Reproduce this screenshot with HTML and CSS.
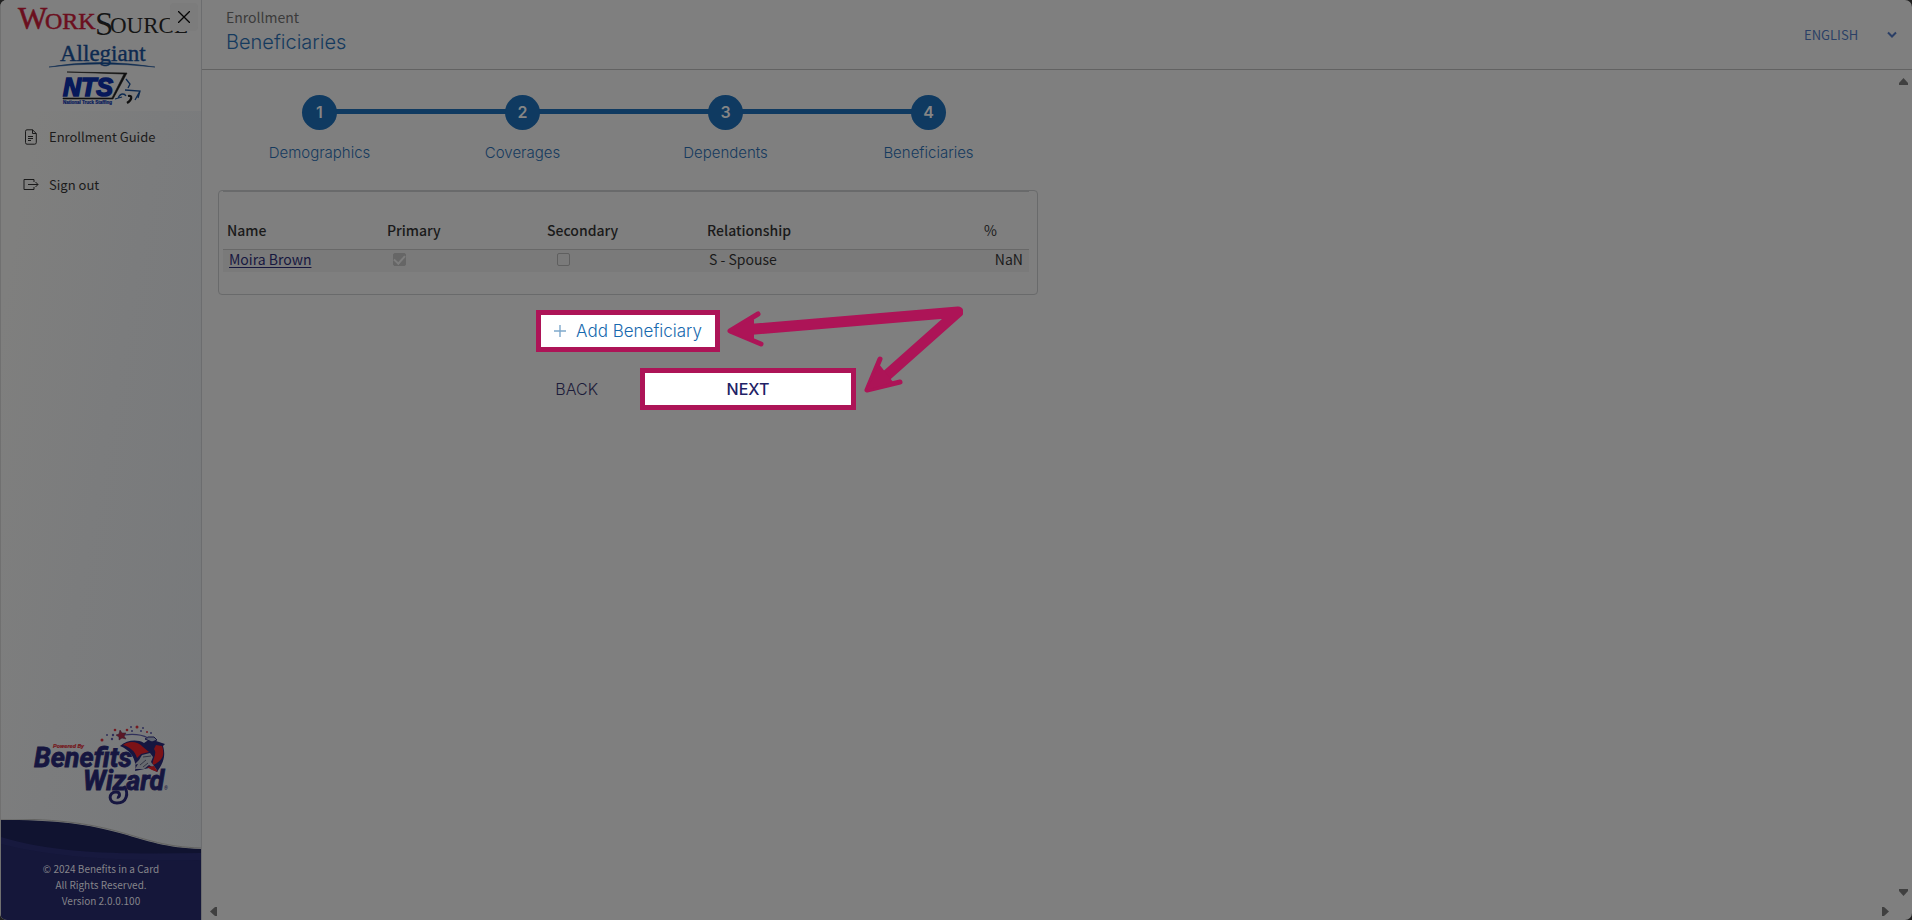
FILE: index.html
```html
<!DOCTYPE html>
<html lang="en">
<head>
<meta charset="utf-8">
<title>Beneficiaries</title>
<link rel="stylesheet" href="styles.css">
</head>
<body>
<div class="app">
  <aside class="sidebar">
    <div class="brand">
      <svg class="brand-logos" viewBox="0 0 200 111" role="img" aria-label="WorkSource, Allegiant, NTS">
        <g font-family="Liberation Serif, serif">
          <text x="17" y="29" font-size="31" fill="#6b0f1e" stroke="#6b0f1e" stroke-width=".6">W</text>
          <text x="44" y="29" font-size="24" fill="#6b0f1e" stroke="#6b0f1e" stroke-width=".5">ORK</text>
          <text x="94" y="35" font-size="33" fill="#151515">S</text>
          <text x="109" y="33" font-size="23" fill="#151515">OURCE</text>
          <text x="59" y="61" font-size="23" fill="#0d2a50" stroke="#0d2a50" stroke-width=".4">Allegiant</text>
        </g>
        <path d="M48 67Q98 58 154 67Q98 61 48 67Z" fill="#0d2a50" stroke="#0d2a50" stroke-width=".5"/>
        <text x="62" y="96" font-family="Liberation Sans, sans-serif" font-size="25" font-weight="700" font-style="italic" fill="#07195a" stroke="#07195a" stroke-width="1.6">NTS</text>
        <path d="M66 72L126 73L112 99H62V98H111L123 74Z" fill="#101010" stroke="#101010" stroke-width=".6"/>
        <text x="62" y="104" font-family="Liberation Sans, sans-serif" font-size="4.500" font-weight="700" fill="#07195a" stroke="#07195a" stroke-width=".2">National Truck Staffing</text>
        <path d="M125 79L129 84L127 88M124 90L139 91L137 98M139 91L134 100M114 99L121 97M117 98C120 92 124 94 125 96" fill="none" stroke="#0d2a50" stroke-width="1.3"/>
        <path d="M127 96C132 95 131 100 126 103" fill="none" stroke="#101010" stroke-width="2.2"/>
      </svg>
      <button class="close" type="button" aria-label="Close menu">
        <svg viewBox="0 0 12 12" width="12" height="12"><path d="M0 0L12 12M12 0L0 12" stroke="#050505" stroke-width="1.3"/></svg>
      </button>
    </div>
    <nav class="menu">
      <a class="menu-link" href="#guide">
        <svg viewBox="0 0 16 16" width="16" height="16" fill="none" stroke="#1b1b1b"><path d="M4 .8H9.500L13.300 4.500V13.500Q13.300 15.200 11.600 15.200H4Q2.500 15.200 2.500 13.500V2.300Q2.500 .8 4 .8ZM9.500 .8V4.500H13.300M5 7.500H10M5 9.500H10M5 11.500H8"/></svg>
        <span>Enrollment Guide</span>
      </a>
      <a class="menu-link" href="#signout">
        <svg viewBox="0 0 16 16" width="16" height="16" fill="none" stroke="#1b1b1b"><path d="M11 5V2.500H1V12.500H11V10M5 7.500H15M12.500 5L15 7.500L12.500 10"/></svg>
        <span>Sign out</span>
      </a>
    </nav>
    <svg class="wizard" viewBox="0 0 140 84" role="img" aria-label="Powered By Benefits Wizard">
      <g font-family="Roboto, sans-serif" font-weight="700" font-style="italic" fill="#161640">
        <text x="22" y="23" font-size="6" fill="#751a20" stroke="#751a20" stroke-width=".2">Powered By</text>
        <g stroke="#161640" stroke-width=".8">
          <text x="3" y="42" font-size="27">Benefits</text>
          <text x="52" y="65" font-size="27">Wizard</text>
        </g>
        <text x="133" y="65" font-size="5" font-weight="400">®</text>
      </g>
      <path d="M93 61C98 68 96 78 86 78C77 78 77 67 85 67C90 67 89 73 86 72" fill="none" stroke="#161640" stroke-width="3"/>
      <path d="M89 21C96 15 106 14 113 18L119 14L134 19L132 21C136 34 129 42 126 47L118 43L104 46C106 38 102 26 89 21Z" fill="#161640"/>
      <path d="M92 20C99 15 107 17 112 22L118 27L110 29L106 33C104 26 99 22 92 20Z" fill="#7c1216"/>
      <path d="M125 20L131 21C135 32 129 37 122 40C120 36 127 29 123 24Z" fill="#7c1216"/>
      <path d="M114 14L117 12L123 12L126 15L121 17Z" fill="#5f6470" stroke="#161640"/>
      <path d="M111 30L119 28L122 32L120 37L126 45L118 40L113 44L104 44L107 39L103 40L108 35Z" fill="#686b70"/>
      <path d="M109 40L115 35M112 42L117 38M112 32L120 31" stroke="#262738" stroke-width=".8"/>
      <path d="M116 42L123 41L127 47L121 45Z" fill="#7c1216"/>
      <path d="M93 10Q108 8 117 13" fill="none" stroke="#30305a" stroke-width="1.200"/>
      <path d="M89 5L91 8L95 8L93 11L95 14L91 13L88 15L88 12L85 10L88 9Z" fill="#5c1826" stroke="#30182f" stroke-width=".5"/>
      <g fill="#751a20"><circle cx="71" cy="15" r="1.500"/><circle cx="84" cy="5" r="1.300"/><circle cx="96" cy="5" r="1.300"/><circle cx="106" cy="2" r="1.500"/><circle cx="116" cy="7" r="1"/></g>
      <g fill="#30305a"><circle cx="76" cy="10" r="1"/><circle cx="81" cy="14" r="1.200"/><circle cx="82" cy="10" r="1.200"/><circle cx="100" cy="2" r="1"/><circle cx="101" cy="6" r="1"/><circle cx="110" cy="6" r="1"/><circle cx="112" cy="3" r="1"/><circle cx="120" cy="8" r="1"/></g>
    </svg>
    <svg class="wave" viewBox="0 0 201 43" preserveAspectRatio="none" aria-hidden="true">
      <path d="M0 1C125 0 130 28 201 30V43H0Z" fill="#101330"/>
      <path d="M0 0C125 -1 130 27 201 29" fill="none" stroke="#626260" stroke-width="1"/>
      <path d="M0 18C60 36 130 35 201 34V43H0Z" fill="#17193e"/>
      <path d="M0 25C60 40 130 42 201 41V43H0Z" fill="#15173a"/>
    </svg>
    <footer class="legal">
      <p>© 2024 Benefits in a Card</p>
      <p>All Rights Reserved.</p>
      <p>Version 2.0.0.100</p>
    </footer>
  </aside>

  <div class="page">
    <header class="topbar">
      <div>
        <p class="section">Enrollment</p>
        <h1 class="title">Beneficiaries</h1>
      </div>
      <label class="language">
        <select aria-label="Language"><option>ENGLISH</option></select>
        <svg viewBox="0 0 10 7" width="10" height="7"><path d="M1 1.500L5 5.500L9 1.500" fill="none" stroke="#2b3f66" stroke-width="2"/></svg>
      </label>
    </header>

    <div class="viewport">
      <main class="content">
        <ol class="steps">
          <li><span class="dot">1</span><span>Demographics</span></li>
          <li><span class="dot">2</span><span>Coverages</span></li>
          <li><span class="dot">3</span><span>Dependents</span></li>
          <li><span class="dot">4</span><span>Beneficiaries</span></li>
        </ol>
        <section class="card">
          <table class="grid">
            <thead>
              <tr><th>Name</th><th>Primary</th><th>Secondary</th><th>Relationship</th><th class="pct">%</th></tr>
            </thead>
            <tbody>
              <tr>
                <td><a href="#moira">Moira Brown</a></td>
                <td class="check-primary"><input type="checkbox" aria-label="Primary" checked disabled></td>
                <td class="check-secondary"><input type="checkbox" aria-label="Secondary" disabled></td>
                <td>S - Spouse</td>
                <td class="num">NaN</td>
              </tr>
            </tbody>
          </table>
        </section>
        <div class="actions">
          <div class="action-row">
            <button class="add" type="button">
              <svg viewBox="0 0 12 12" width="12" height="12"><path d="M6 0V12M0 6H12" stroke="#7fa9cc" stroke-width="1.400"/></svg>
              Add Beneficiary
            </button>
          </div>
          <div class="action-row">
            <button class="back" type="button">BACK</button>
            <button class="next" type="button">NEXT</button>
          </div>
          <svg class="arrows" viewBox="0 0 240 110" width="240" height="110" aria-hidden="true">
            <g fill="none" stroke="#ad1457" stroke-linecap="round" stroke-linejoin="round">
              <path d="M20 32L235 14L154 86" stroke-width="11"/>
              <path d="M35 16L7 33L38 46" stroke-width="5"/>
              <path d="M157 61L144 92L177 84" stroke-width="5"/>
            </g>
            <path d="M7 33L31 21V44ZM144 92L156 66L170 84Z" fill="#ad1457"/>
          </svg>
        </div>
      </main>
      <div class="bar-y">
        <svg viewBox="0 0 9 7" width="9" height="7"><path d="M4.500 0L9 5V7H0V5Z" fill="#404040"/></svg>
        <svg viewBox="0 0 9 7" width="9" height="7"><path d="M4.500 7L9 2V0H0V2Z" fill="#404040"/></svg>
      </div>
      <div class="bar-x">
        <svg viewBox="0 0 7 9" width="7" height="9"><path d="M0 4.500L5 0H7V9H5Z" fill="#404040"/></svg>
        <svg viewBox="0 0 7 9" width="7" height="9"><path d="M7 4.500L2 0H0V9H2Z" fill="#404040"/></svg>
      </div>
    </div>
  </div>
</div>
</body>
</html>
```
FILE: styles.css
```css
* { box-sizing: border-box; }

:root {
  --sans: "Noto Sans CJK SC", "Noto Sans", sans-serif;
  --display: Inter, "Open Sans", sans-serif;
  --grey: #7f7f7f;
  --line: #696a6b;
  --blue: #153a5e;
  --ink: #1a1a1a;
  --pink: #ad1457;
}

body {
  margin: 0;
  background: #202020;
  font: 14px/20px var(--sans);
  color: var(--ink);
}

p, h1, ol { margin: 0; padding: 0; }
button { margin: 0; padding: 0; border: 0; background: none; }
svg { display: block; flex: none; }

.app {
  display: flex;
  height: 100vh;
  overflow: hidden;
  border-radius: 7px;
  background: var(--grey);
}

/* Sidebar */
.sidebar {
  display: flex;
  flex-direction: column;
  flex: none;
  width: 202px;
  border-right: 1px solid #6c6d6f;
  border-left: 1px solid #707070;
  background: linear-gradient(100deg, #7f7f7e 15%, #7b7c7d 50%, #77797b 100%);
}
.brand { position: relative; background: var(--grey); }
.brand-logos { width: 200px; height: 111px; }
.close {
  position: absolute;
  top: 3px;
  right: 3px;
  display: grid;
  place-items: center;
  width: 28px;
  height: 28px;
  border-radius: 4px;
  background: #7c7c7c;
}
.menu {
  display: flex;
  flex-direction: column;
  gap: 28px;
  padding: 16px 0 0 22px;
}
.menu-link {
  display: flex;
  align-items: center;
  gap: 10px;
  color: #1b1b1b;
  font-size: 13px;
  text-decoration: none;
}
.wizard { width: 140px; height: 84px; margin: auto 0 10px 30px; }
.wave { width: 100%; height: 43px; margin-bottom: -1px; }
.legal {
  padding-bottom: 11px;
  background: #15173a;
  color: #85858a;
  font-size: 10px;
  line-height: 16px;
  text-align: center;
}

/* Header */
.page { display: flex; flex: 1; flex-direction: column; min-width: 0; }
.topbar {
  display: flex;
  align-items: center;
  justify-content: space-between;
  height: 70px;
  padding: 0 15px 0 24px;
  border-bottom: 1px solid #626262;
}
.section { margin-top: -6px; color: #3b3b3b; line-height: 20px; }
.title {
  color: var(--blue);
  font: 300 20px/30px var(--display);
}
.language { display: flex; align-items: center; gap: 8px; }
.language select {
  appearance: none;
  width: 75px;
  padding: 0;
  border: 0;
  background: none;
  color: #2b3f66;
  font: 13px/20px var(--sans);
}

/* Scrolling area */
.viewport {
  display: grid;
  flex: 1;
  grid-template-columns: 1fr 17px;
  grid-template-rows: 1fr 17px;
  min-height: 0;
}
.content { padding: 25px 16px 0; }
.bar-y, .bar-x {
  display: flex;
  align-items: center;
  justify-content: space-between;
}
.bar-y { flex-direction: column; padding: 8px 0 7px; }
.bar-x { padding: 0 6px 0 8px; }

/* Progress steps */
.steps {
  display: grid;
  grid-template-columns: repeat(4, 1fr);
  max-width: 812px;
  list-style: none;
  color: var(--blue);
  font: 300 15px/20px var(--display);
}
.steps li {
  position: relative;
  display: flex;
  flex-direction: column;
  align-items: center;
  gap: 13px;
}
.steps li + li::before {
  content: "";
  position: absolute;
  top: 14px;
  right: 50%;
  width: 100%;
  height: 5px;
  background: #0f3a61;
}
.dot {
  position: relative;
  z-index: 1;
  width: 35px;
  height: 35px;
  border-radius: 50%;
  background: #0f3a61;
  color: #858585;
  font-size: 16px;
  font-weight: 600;
  line-height: 34px;
  text-align: center;
}

/* Beneficiary table */
.card {
  max-width: 820px;
  margin-top: 27px;
  padding: 0 8px 22px 4px;
  border: 1px solid var(--line);
  border-radius: 4px;
}
.grid {
  width: 100%;
  border-collapse: collapse;
  border-top: 1px solid var(--line);
  table-layout: fixed;
}
.grid th {
  width: 160px;
  height: 58px;
  padding: 18px 4px 0;
  font-weight: 500;
  text-align: left;
}
.grid th.pct { width: auto; padding-left: 121px; font-weight: 400; }
.grid td { height: 22px; padding: 0 6px 4px; line-height: 18px; }
.grid tbody tr { border-top: 1px solid #686868; background: #7a7a7a; }
.grid a { color: #17173f; text-decoration: underline; text-underline-offset: 2px; }
.grid .num { text-align: right; }
.grid .check-primary { padding-left: 10px; }
.grid .check-secondary { padding-left: 14px; }
.grid input {
  display: grid;
  place-items: center;
  appearance: none;
  width: 13px;
  height: 13px;
  margin: 0;
  border: 1px solid #5f5f5f;
  border-radius: 2px;
}
.grid input:checked { border-color: #666; background: #666; }
.grid input:checked::before {
  content: "";
  width: 9px;
  height: 5px;
  margin-bottom: 2px;
  border: solid #7d7d7d;
  border-width: 0 0 2px 2px;
  rotate: -48deg;
}

/* Actions */
.actions {
  position: relative;
  display: flex;
  flex-direction: column;
  gap: 16px;
  max-width: 820px;
  margin-top: 15px;
}
.action-row { display: flex; justify-content: center; }
.actions button { height: 42px; font: 300 16px/20px var(--display); }
.add, .next { border: 5px solid var(--pink); background: #fff; }
.actions .add {
  display: flex;
  align-items: center;
  justify-content: center;
  gap: 10px;
  width: 184px;
  color: #1769ae;
  font-size: 17px;
}
.actions .back {
  width: 240px;
  padding-right: 42px;
  color: #1c1c3a;
  text-align: right;
}
.actions .next { width: 216px; color: #1f2266; font-weight: 500; }
.arrows { position: absolute; top: -12px; left: 505px; }
```
